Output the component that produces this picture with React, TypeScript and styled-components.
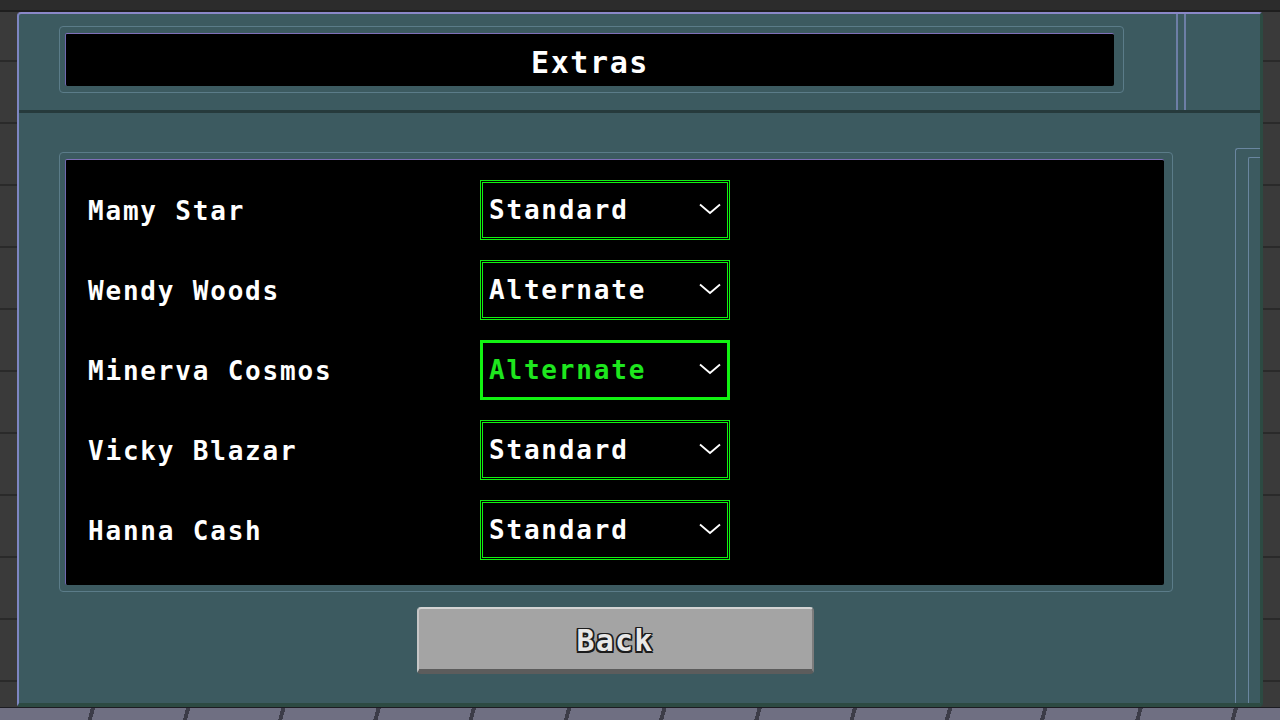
import React from "react";
import styled, { createGlobalStyle, css } from "styled-components";

const GlobalStyle = createGlobalStyle`
  html, body {
    margin: 0;
    padding: 0;
    background: #2f2f2f;
  }
  * { box-sizing: border-box; }
`;

const PIXEL_FONT = `"DejaVu Sans Mono", "Liberation Mono", monospace`;
const GREEN = "#12f212";
const TEAL = "#3c5a60";
const LAVENDER = "#8a88c8";
const FRAME_LINE = "#5b7c89";

const Screen = styled.div`
  width: 1280px;
  height: 720px;
  overflow: hidden;
  display: flex;
  flex-direction: column;
  background:
    linear-gradient(to bottom, #2c2c2c 0 10px, #1e1e1e 10px 12px, transparent 12px),
    repeating-linear-gradient(to bottom, #3a3a3a 0 60px, #2a2a2a 60px 62px),
    #333;
`;

const Panel = styled.div`
  margin: 12px 0 0 17px;
  width: 1246px;
  height: 695px;
  background: ${TEAL};
  border-top: 2px solid ${LAVENDER};
  border-left: 2px solid #7e86c2;
  border-right: 3px solid #2c4a42;
  border-bottom: 4px solid #2d4a42;
  border-radius: 4px 4px 4px 3px;
  display: flex;
  flex-direction: column;
`;

const TopSection = styled.div`
  height: 99px;
  flex-shrink: 0;
  display: flex;
  align-items: stretch;
  border-bottom: 3px solid #263a3c;
`;

const HeaderFrame = styled.div`
  margin: 12px 0 0 40px;
  width: 1065px;
  height: 67px;
  border: 1px solid ${FRAME_LINE};
  border-radius: 4px;
  padding: 6px 9px 6px 5px;
  display: flex;
`;

const BlackBox = styled.div`
  flex: 1;
  background: #000;
  border-top: 1px solid #7f70b8;
  border-left: 1px solid #6f68b0;
  border-radius: 2px;
`;

const HeaderBox = styled(BlackBox)`
  display: flex;
  align-items: center;
  justify-content: center;
`;

const Title = styled.h1`
  margin: 4px 0 0 0;
  font-family: ${PIXEL_FONT};
  font-weight: bold;
  font-size: 30px;
  letter-spacing: 1.6px;
  color: #fff;
`;

const Divider = styled.div`
  margin-left: 52px;
  width: 10px;
  border-left: 2px solid #6d7ea6;
  border-right: 2px solid #6d7ea6;
`;

const LowerSection = styled.div`
  flex: 1;
  display: flex;
`;

const MainColumn = styled.div`
  width: 1154px;
  padding: 39px 0 0 40px;
  display: flex;
  flex-direction: column;
`;

const ContentFrame = styled.div`
  width: 1114px;
  height: 440px;
  border: 1px solid ${FRAME_LINE};
  border-radius: 4px;
  padding: 6px 8px 6px 5px;
  display: flex;
`;

const ListBox = styled(BlackBox)`
  padding: 20px 0 0 22px;
  display: grid;
  grid-template-columns: 392px 250px;
  grid-auto-rows: 60px;
  row-gap: 20px;
  align-content: start;
`;

const Label = styled.div`
  display: flex;
  align-items: center;
  font-family: ${PIXEL_FONT};
  font-weight: bold;
  font-size: 26px;
  letter-spacing: 1.8px;
  color: #fff;
  padding-top: 1px;
`;

const Select = styled.div<{ $active?: boolean }>`
  display: flex;
  align-items: center;
  justify-content: space-between;
  padding: 0 8px 0 8px;
  border: 1px solid ${GREEN};
  box-shadow: inset 0 0 0 1px #000, inset 0 0 0 2px ${GREEN};
  font-family: ${PIXEL_FONT};
  font-weight: bold;
  font-size: 26px;
  letter-spacing: 1.8px;
  color: #fff;
  ${(p) =>
    p.$active &&
    css`
      border: 3px solid ${GREEN};
      box-shadow: none;
      padding: 0 6px 0 6px;
      color: #1ee61e;
    `}
`;

const Chevron = () => (
  <svg width="22" height="12" viewBox="0 0 22 12" style={{ flexShrink: 0, marginTop: -2 }}>
    <path d="M1 1.5 L11 10 L21 1.5" fill="none" stroke="#fff" strokeWidth="1.8" />
  </svg>
);

const BackButton = styled.button`
  align-self: center;
  margin: 15px 0 0 -2px;
  width: 397px;
  height: 67px;
  background: #a4a4a4;
  border-top: 2px solid #d4d4d4;
  border-left: 2px solid #c6c6c6;
  border-right: 2px solid #7c7c7c;
  border-bottom: 5px solid #5c5c5c;
  border-radius: 4px;
  display: flex;
  align-items: center;
  justify-content: center;
  padding: 2px 0 0 0;
  font-family: ${PIXEL_FONT};
  font-weight: bold;
  font-size: 30px;
  letter-spacing: 1.2px;
  color: #e8e8e8;
  text-shadow:
    -1.5px 0 #1c1c1c, 1.5px 0 #1c1c1c, 0 -1.5px #1c1c1c, 0 1.5px #1c1c1c,
    -1.5px -1.5px #1c1c1c, 1.5px -1.5px #1c1c1c, -1.5px 1.5px #1c1c1c, 1.5px 1.5px #1c1c1c;
`;

const RightRail = styled.div`
  margin: 35px 0 0 62px;
  flex: 1;
  border-left: 1px solid #6a86a0;
  border-top: 1px solid #6a86a0;
  border-top-left-radius: 3px;
  padding: 8px 0 0 12px;
  display: flex;
`;

const RailInner = styled.div`
  flex: 1;
  border-left: 1px solid #6a86a0;
  border-top: 1px solid #6a86a0;
  border-top-left-radius: 2px;
`;

const Floor = styled.div`
  flex: 1;
  background:
    linear-gradient(to bottom, #1c1c22 0 1px, transparent 1px),
    repeating-linear-gradient(105deg, #6f6f82 0 88px, #3c3c48 88px 92px),
    #6a6a7c;
`;

const rows: { name: string; value: string; active?: boolean }[] = [
  { name: "Mamy Star", value: "Standard" },
  { name: "Wendy Woods", value: "Alternate" },
  { name: "Minerva Cosmos", value: "Alternate", active: true },
  { name: "Vicky Blazar", value: "Standard" },
  { name: "Hanna Cash", value: "Standard" },
];

export default function App() {
  return (
    <>
      <GlobalStyle />
      <Screen>
        <Panel>
          <TopSection>
            <HeaderFrame>
              <HeaderBox>
                <Title>Extras</Title>
              </HeaderBox>
            </HeaderFrame>
            <Divider />
          </TopSection>
          <LowerSection>
            <MainColumn>
              <ContentFrame>
                <ListBox>
                  {rows.map((r) => (
                    <React.Fragment key={r.name}>
                      <Label>{r.name}</Label>
                      <Select $active={r.active}>
                        <span>{r.value}</span>
                        <Chevron />
                      </Select>
                    </React.Fragment>
                  ))}
                </ListBox>
              </ContentFrame>
              <BackButton>Back</BackButton>
            </MainColumn>
            <RightRail>
              <RailInner />
            </RightRail>
          </LowerSection>
        </Panel>
        <Floor />
      </Screen>
    </>
  );
}
